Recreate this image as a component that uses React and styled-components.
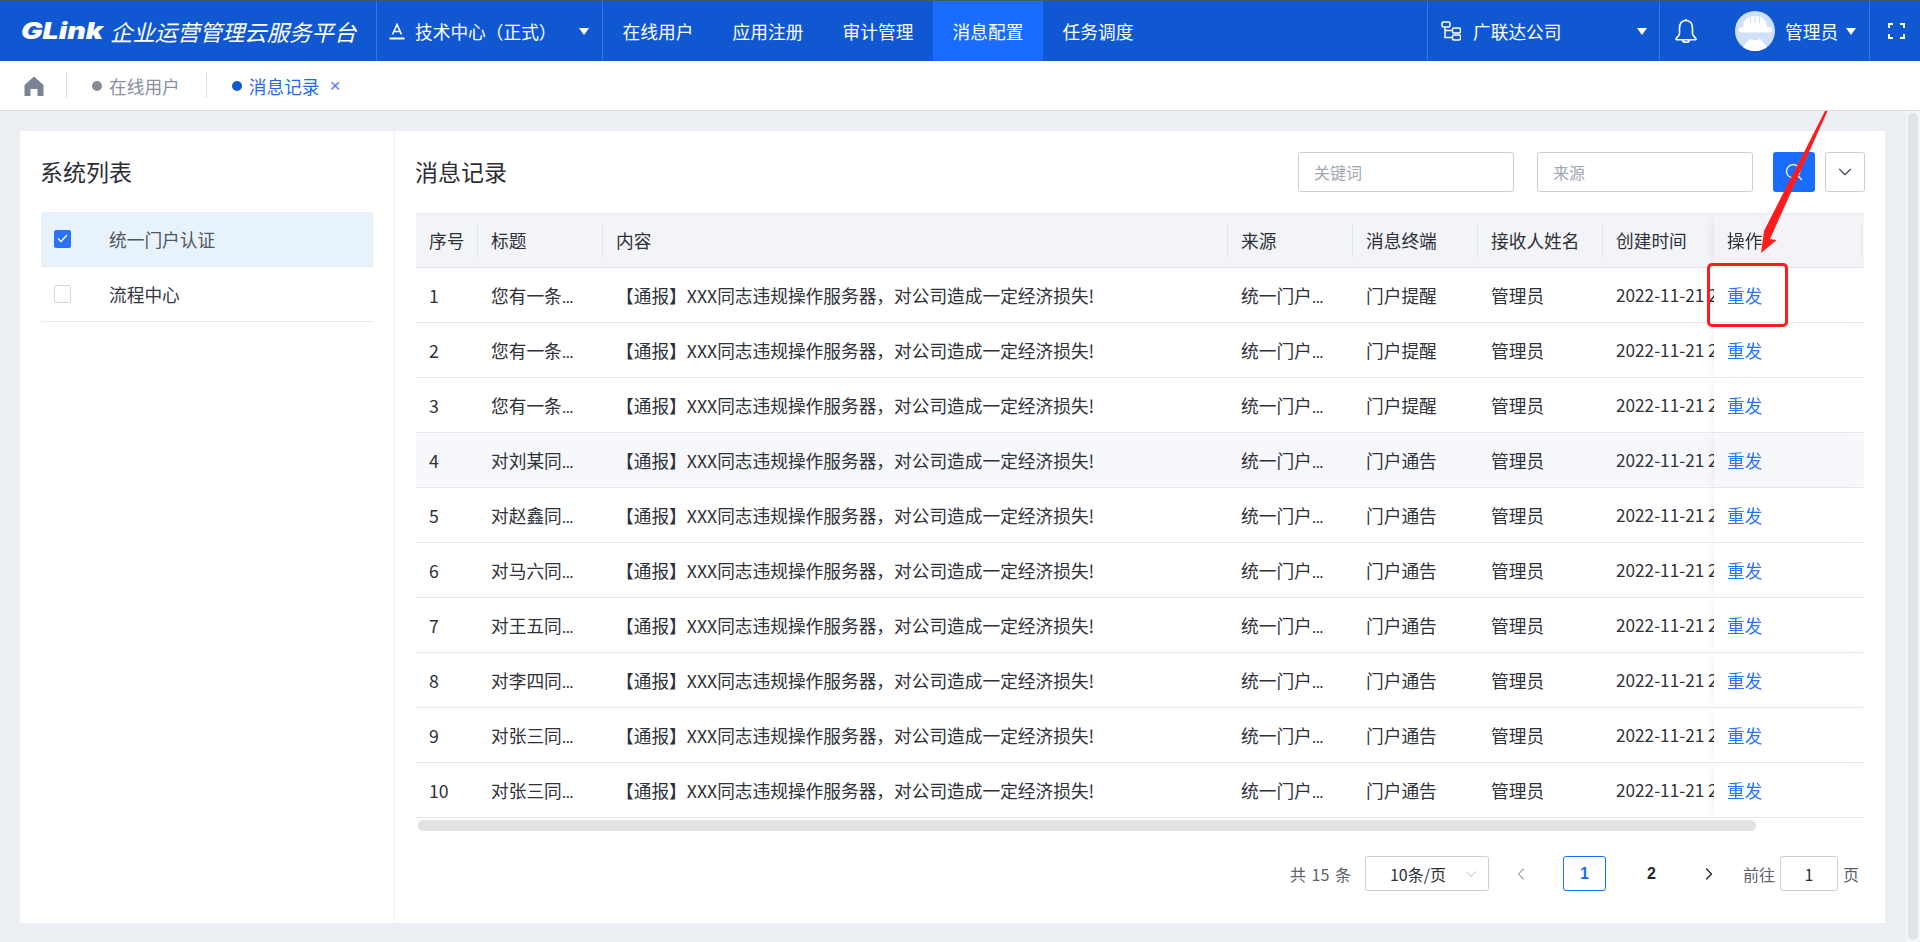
import styled, { createGlobalStyle } from 'styled-components';
import { Search, ChevronDown, ChevronLeft, ChevronRight } from 'lucide-react';

const cjk = `"Noto Sans CJK SC", "Liberation Sans", sans-serif`;
const ellipsisFont = `Roboto, "Noto Sans CJK SC", sans-serif`;

const GlobalStyle = createGlobalStyle`
  html, body { margin: 0; padding: 0; overflow: hidden; background: #ebeef2; }
  * { box-sizing: border-box; }
  body { font-family: ${cjk}; color: #2e3138; }
`;

const Page = styled.div`
  position: relative;
  width: 1920px;
  height: 942px;
  display: flex;
  flex-direction: column;
  overflow: hidden;
  border-top: 1px solid #4b5563;
`;

/* top bar */
const Header = styled.header`
  height: 60px;
  flex: none;
  display: flex;
  align-items: stretch;
  background: #1058d2;
  color: #fff;
  font-size: 17.7px;
`;
const Brand = styled.div`
  width: 376px;
  display: flex;
  align-items: center;
  padding-left: 21px;
`;
const BrandMark = styled.span`
  display: inline-block;
  width: 89px;
  flex: none;
  font-family: Inter, sans-serif;
  font-weight: 900;
  font-style: italic;
  font-size: 22.5px;
  line-height: 1;
  transform: scaleX(1.27);
  transform-origin: left center;
`;
const BrandName = styled.span`
  font-size: 22.4px;
  font-style: italic;
  white-space: nowrap;
`;
const HeaderBlock = styled.div`
  width: ${p => p.$w}px;
  flex: none;
  display: flex;
  align-items: center;
  padding: 0 ${p => p.$pr || 13}px 0 ${p => p.$pl || 13}px;
  border-left: 1px solid #3a78dc;
  svg { flex: none; }
`;
const HeaderLabel = styled.span`
  margin-left: ${p => p.$ml || 10}px;
  white-space: nowrap;
  flex: 1;
`;
const Caret = styled.span`
  width: 0;
  height: 0;
  flex: none;
  border-left: 5.5px solid transparent;
  border-right: 5.5px solid transparent;
  border-top: 7px solid #fff;
`;
const Nav = styled.nav`
  display: flex;
  flex: 1;
  border-left: 1px solid #3a78dc;
`;
const NavItem = styled.a`
  width: 110px;
  display: flex;
  align-items: center;
  justify-content: center;
  background: ${p => (p.$active ? '#1a6cff' : 'transparent')};
`;
const Avatar = styled.svg`
  width: 40px;
  height: 40px;
  margin-left: 37px;
`;

/* tab strip */
const TabBar = styled.div`
  height: 50px;
  flex: none;
  display: flex;
  align-items: center;
  background: #fff;
  border-bottom: 1px solid #d7dbe1;
  padding-left: 24px;
  font-size: 17.7px;
`;
const TabSep = styled.span`
  width: 1px;
  height: 25px;
  background: #d9dce2;
  margin-left: ${p => p.$ml}px;
`;
const Tab = styled.div`
  display: flex;
  align-items: center;
  margin-left: ${p => p.$ml}px;
  color: ${p => (p.$active ? '#1f6bea' : '#8a90a0')};
`;
const TabDot = styled.span`
  width: 10px;
  height: 10px;
  border-radius: 50%;
  margin-right: ${p => p.$mr}px;
  background: ${p => (p.$active ? '#1058d2' : '#858c9c')};
`;
const TabClose = styled.span`
  margin-left: 10px;
  font-size: 19px;
  font-family: "Liberation Sans", sans-serif;
  color: #4f7fe8;
`;

/* content */
const Body = styled.div`
  flex: 1;
  display: flex;
  min-height: 0;
`;
const Content = styled.main`
  width: 1906px;
  flex: none;
  padding: 20px 21px 19px 20px;
  display: flex;
`;
const ScrollTrack = styled.div`
  flex: 1;
  padding: 2px;
  background: #f4f5f7;
`;
const ScrollThumb = styled.div`
  height: 100%;
  border-radius: 5px;
  background: #e1e3e7;
`;
const Card = styled.div`
  flex: 1;
  min-width: 0;
  display: flex;
  background: #fff;
`;
const Sidebar = styled.aside`
  width: 375px;
  flex: none;
  padding: 21px 21px 0 21px;
  border-right: 1px solid #eef0f3;
`;
const SectionTitle = styled.h2`
  margin: 0 0 0 -1px;
  font-size: 23px;
  font-weight: 400;
  line-height: 38px;
  height: 40px;
  color: #2b2e35;
  flex: ${p => (p.$grow ? 1 : 'none')};
`;
const SystemList = styled.ul`
  list-style: none;
  margin: 20px 0 0;
  padding: 0;
`;
const SystemItem = styled.li`
  height: 55px;
  display: flex;
  align-items: center;
  padding: 0 0 1px 13px;
  font-size: 17.7px;
  line-height: 24px;
  border-bottom: 1px solid #e7e9ee;
  background: ${p => (p.$active ? '#e8f2fd' : '#fff')};
  color: ${p => (p.$active ? '#50545c' : '#33363d')};
`;
const CheckBox = styled.span`
  width: 17px;
  height: 18px;
  border-radius: 2px;
  margin-right: 38px;
  display: flex;
  align-items: center;
  justify-content: center;
  border: 1px solid ${p => (p.$on ? '#2b72f5' : '#d3d6de')};
  background: ${p => (p.$on ? '#2b72f5' : '#fff')};
`;
const MainPanel = styled.section`
  flex: 1;
  min-width: 0;
  padding: 21px 21px 0 21px;
  display: flex;
  flex-direction: column;
`;
const Toolbar = styled.div`
  height: 40px;
  margin-right: -1px;
  display: flex;
  align-items: center;
`;
const FilterInput = styled.input`
  width: 216px;
  height: 40px;
  margin-right: ${p => p.$mr}px;
  padding: 0 15px;
  border: 1px solid #c9ced8;
  border-radius: 3px;
  outline: none;
  font-family: ${cjk};
  font-size: 16px;
  &::placeholder { color: #a2a8b4; }
`;
const SearchButton = styled.button`
  width: 42px;
  height: 40px;
  border: none;
  border-radius: 3px;
  background: #1a6cff;
  color: #fff;
  display: flex;
  align-items: center;
  justify-content: center;
  padding: 0;
`;
const MoreButton = styled.button`
  width: 40px;
  height: 40px;
  margin: 0 0 0 10px;
  border: 1px solid #c9ced8;
  border-radius: 3px;
  background: #fff;
  color: #3b4252;
  display: flex;
  align-items: center;
  justify-content: center;
  padding: 0;
`;

/* table */
const TableWrap = styled.div`
  margin-top: 21px;
  overflow: hidden;
`;
const Table = styled.table`
  width: 1565px;
  table-layout: fixed;
  border-collapse: separate;
  border-spacing: 0;
  font-size: 17.7px;
`;
const Col = styled.col`
  width: ${p => p.$w}px;
`;
const Th = styled.th`
  position: relative;
  height: 55px;
  padding: 0 13px 1px;
  text-align: left;
  font-weight: 400;
  white-space: nowrap;
  background: #f2f4f7;
  color: #2e3138;
  border-top: 1px solid #e6e8ee;
  border-bottom: 1px solid #e6e8ee;
  &::after {
    content: '';
    position: absolute;
    right: 0;
    top: 10px;
    bottom: 10px;
    width: 1px;
    background: #e3e6eb;
  }
`;
const FixedTh = styled(Th)`
  position: sticky;
  right: 0;
  z-index: 2;
  box-shadow: -6px 0 8px -5px rgba(0, 0, 0, 0.08);
  &::after { right: 2px; }
`;
const Tr = styled.tr`
  background: ${p => (p.$hover ? '#f7f8fc' : '#fff')};
`;
const Td = styled.td`
  height: 55px;
  padding: 0 13px 1px;
  white-space: nowrap;
  overflow: hidden;
  border-bottom: 1px solid #e6e8ee;
  color: #2e3138;
`;
const EllipsisTd = styled(Td)`
  font-family: ${ellipsisFont};
  text-overflow: ellipsis;
`;
const DateTd = styled(Td)`
  font-size: 17.2px;
`;
const FixedTd = styled(Td)`
  position: sticky;
  right: 0;
  z-index: 2;
  background: inherit;
  box-shadow: -6px 0 8px -5px rgba(0, 0, 0, 0.08);
`;
const LinkAction = styled.a`
  color: #2a74f8;
`;
const HScroll = styled.div`
  width: 1338px;
  height: 11px;
  margin: 2px 0 0 2px;
  border-radius: 5px;
  background: #e2e2e2;
`;

/* pagination */
const Pager = styled.div`
  display: flex;
  align-items: center;
  justify-content: flex-end;
  margin-top: 25px;
  padding-right: 5px;
  font-size: 16px;
  color: #5c616c;
`;
const PagerTotal = styled.span`
  word-spacing: 2px;
`;
const PageSize = styled.div`
  width: 124px;
  height: 35px;
  margin-left: 14px;
  padding: 0 8px 0 24px;
  display: flex;
  align-items: center;
  justify-content: space-between;
  border: 1px solid #c9ced8;
  border-radius: 3px;
  color: #2e3138;
`;
const PageButton = styled.div`
  width: 43px;
  height: 35px;
  margin-left: ${p => p.$ml || 0}px;
  display: flex;
  align-items: center;
  justify-content: center;
  border-radius: 3px;
  font-family: "Liberation Sans", sans-serif;
  font-weight: 700;
  border: 1px solid ${p => (p.$active ? '#1a6cff' : 'transparent')};
  color: ${p => (p.$active ? '#1a6cff' : p.$muted ? '#a8adb8' : '#23262c')};
`;
const JumpInput = styled.div`
  width: 58px;
  height: 35px;
  margin: 0 5px;
  display: flex;
  align-items: center;
  justify-content: center;
  border: 1px solid #c9ced8;
  border-radius: 3px;
  color: #2e3138;
`;
const JumpLabel = styled.span`
  margin-left: ${p => p.$ml || 0}px;
`;

/* hand-drawn annotation lying over the screenshot */
const MarkBox = styled.div`
  position: absolute;
  left: 1707px;
  top: 262px;
  width: 81px;
  height: 64px;
  border: 3.5px solid #ff1c1c;
  border-radius: 5px;
  z-index: 5;
`;
const MarkArrow = styled.svg`
  position: absolute;
  left: 1750px;
  top: 109px;
  width: 80px;
  height: 145px;
  z-index: 5;
`;

const COLUMNS = [62, 125, 625, 125, 125, 125, 228, 150];
const HEADS = ['序号', '标题', '内容', '来源', '消息终端', '接收人姓名', '创建时间'];
const MESSAGE = '【通报】XXX同志违规操作服务器，对公司造成一定经济损失!';
const TITLES = [
  '您有一条新的消息待处理',
  '您有一条新的消息待处理',
  '您有一条新的消息待处理',
  '对刘某同志违规操作的通报',
  '对赵鑫同志违规操作的通报',
  '对马六同志违规操作的通报',
  '对王五同志违规操作的通报',
  '对李四同志违规操作的通报',
  '对张三同志违规操作的通报',
  '对张三同志违规操作的通报',
];

const ProjectIcon = () => (
  <svg width="16" height="17" viewBox="0 0 16 17" fill="none" stroke="#fff">
    <path d="M3.5 11.5 L8 1.5 L12.5 11.5 M5 8.5 H11" strokeWidth="1.6" />
    <path d="M0.5 15.5 H15.5" strokeWidth="2" />
  </svg>
);

const OrgIcon = () => (
  <svg width="20" height="20" viewBox="0 0 20 20" fill="none" stroke="#fff" strokeWidth="1.5">
    <rect x="1" y="1" width="8" height="5" rx="1.5" />
    <rect x="11.5" y="7" width="8" height="5" rx="1.5" />
    <rect x="11.5" y="14" width="8" height="5" rx="1.5" />
    <path d="M4 6 V16.5 H11.5 M4 9.5 H11.5" />
  </svg>
);

const BellIcon = () => (
  <svg width="24" height="26" viewBox="0 0 24 26" fill="none" stroke="#fff" strokeWidth="1.6">
    <path d="M12 2.5 C7.5 2.5 5.5 6 5.5 10.5 V15.5 C5.5 17.5 3 19 2 20.8 C1.8 21.3 2 21.7 2.6 21.7 H21.4 C22 21.7 22.2 21.3 22 20.8 C21 19 18.5 17.5 18.5 15.5 V10.5 C18.5 6 16.5 2.5 12 2.5 Z" />
    <path d="M8.5 22 C9 25 15 25 15.5 22" />
    <path d="M12 1 V2.5" />
  </svg>
);

const FullscreenIcon = () => (
  <svg width="17" height="16" viewBox="0 0 17 16" fill="none" stroke="#fff" strokeWidth="2">
    <path d="M1 5 V1 H5 M12 1 H16 V5 M16 11 V15 H12 M5 15 H1 V11" />
  </svg>
);

const HomeIcon = () => (
  <svg width="20" height="20" viewBox="0 0 20 20" fill="#7b8494">
    <path d="M10 0.5 L19.5 9 V20 H13.5 V13 H6.5 V20 H0.5 V9 Z" />
  </svg>
);

const WorkerAvatar = () => (
  <Avatar viewBox="0 0 40 40">
    <defs>
      <clipPath id="avatarClip"><circle cx="20" cy="20" r="20" /></clipPath>
    </defs>
    <circle cx="20" cy="20" r="20" fill="#cfe0fb" />
    <g clipPath="url(#avatarClip)" fill="#fff">
      <path d="M8 16 C8 9 13 5 20 5 C27 5 32 9 32 16 Z" />
      <rect x="4" y="16" width="33" height="5.5" rx="2.7" />
      <path d="M15 27 C16 30 24 30 25 27 C26 31 31 31 33 40 H7 C9 31 14 31 15 27 Z" />
    </g>
    <path d="M15.5 6 V12 M20 5 V12 M24.5 6 V12" stroke="#cfe0fb" strokeWidth="1" />
  </Avatar>
);

const App = () => {
  return (
    <Page>
      <GlobalStyle />
      <Header>
        <Brand>
          <BrandMark>GLink</BrandMark>
          <BrandName>企业运营管理云服务平台</BrandName>
        </Brand>
        <HeaderBlock $w={226} $pl={12}>
          <ProjectIcon />
          <HeaderLabel>技术中心（正式）</HeaderLabel>
          <Caret />
        </HeaderBlock>
        <Nav>
          <NavItem>在线用户</NavItem>
          <NavItem>应用注册</NavItem>
          <NavItem>审计管理</NavItem>
          <NavItem $active>消息配置</NavItem>
          <NavItem>任务调度</NavItem>
        </Nav>
        <HeaderBlock $w={232} $pr={12}>
          <OrgIcon />
          <HeaderLabel $ml={12}>广联达公司</HeaderLabel>
          <Caret />
        </HeaderBlock>
        <HeaderBlock $w={210} $pl={14} $pr={13}>
          <BellIcon />
          <WorkerAvatar />
          <HeaderLabel>管理员</HeaderLabel>
          <Caret />
        </HeaderBlock>
        <HeaderBlock $w={51} $pl={18}>
          <FullscreenIcon />
        </HeaderBlock>
      </Header>

      <TabBar>
        <HomeIcon />
        <TabSep $ml={22} />
        <Tab $ml={25}>
          <TabDot $mr={7} />
          在线用户
        </Tab>
        <TabSep $ml={26} />
        <Tab $ml={25} $active>
          <TabDot $mr={7} $active />
          消息记录
          <TabClose>×</TabClose>
        </Tab>
      </TabBar>

      <Body>
        <Content>
          <Card>
            <Sidebar>
              <SectionTitle>系统列表</SectionTitle>
              <SystemList>
                <SystemItem $active>
                  <CheckBox $on>
                    <svg width="11" height="9" viewBox="0 0 11 9" fill="none" stroke="#fff" strokeWidth="1.3">
                      <path d="M1 4.5 L4 7.5 L10 1" />
                    </svg>
                  </CheckBox>
                  统一门户认证
                </SystemItem>
                <SystemItem>
                  <CheckBox />
                  流程中心
                </SystemItem>
              </SystemList>
            </Sidebar>

            <MainPanel>
              <Toolbar>
                <SectionTitle $grow>消息记录</SectionTitle>
                <FilterInput $mr={23} placeholder="关键词" />
                <FilterInput $mr={20} placeholder="来源" />
                <SearchButton>
                  <Search size={20} strokeWidth={1.5} />
                </SearchButton>
                <MoreButton>
                  <ChevronDown size={22} strokeWidth={1.2} />
                </MoreButton>
              </Toolbar>

              <TableWrap>
                <Table>
                  <colgroup>
                    {COLUMNS.map((w, i) => (
                      <Col key={i} $w={w} />
                    ))}
                  </colgroup>
                  <thead>
                    <tr>
                      {HEADS.map(h => (
                        <Th key={h}>{h}</Th>
                      ))}
                      <FixedTh>操作</FixedTh>
                    </tr>
                  </thead>
                  <tbody>
                    {TITLES.map((title, i) => (
                      <Tr key={i} $hover={i === 3}>
                        <Td>{i + 1}</Td>
                        <EllipsisTd>{title}</EllipsisTd>
                        <Td>{MESSAGE}</Td>
                        <EllipsisTd>统一门户认证中心</EllipsisTd>
                        <Td>{i < 3 ? '门户提醒' : '门户通告'}</Td>
                        <Td>管理员</Td>
                        <DateTd>2022-11-21 20:11:00</DateTd>
                        <FixedTd>
                          <LinkAction>重发</LinkAction>
                        </FixedTd>
                      </Tr>
                    ))}
                  </tbody>
                </Table>
              </TableWrap>
              <HScroll />

              <Pager>
                <PagerTotal>共 15 条</PagerTotal>
                <PageSize>
                  10条/页
                  <ChevronDown size={18} strokeWidth={1.2} color="#b4b9c4" />
                </PageSize>
                <PageButton $ml={11} $muted>
                  <ChevronLeft size={20} strokeWidth={1.5} />
                </PageButton>
                <PageButton $ml={20} $active>1</PageButton>
                <PageButton $ml={24}>2</PageButton>
                <PageButton $ml={15}>
                  <ChevronRight size={20} strokeWidth={1.6} />
                </PageButton>
                <JumpLabel $ml={12}>前往</JumpLabel>
                <JumpInput>1</JumpInput>
                <JumpLabel>页</JumpLabel>
              </Pager>
            </MainPanel>
          </Card>
        </Content>
        <ScrollTrack>
          <ScrollThumb />
        </ScrollTrack>
      </Body>

      <MarkBox />
      <MarkArrow viewBox="0 0 80 145">
        <polygon points="77.5,1 75,1 14,121 11,143 26.7,130 20,129" fill="#ff1c1c" />
      </MarkArrow>
    </Page>
  );
};

export default App;
